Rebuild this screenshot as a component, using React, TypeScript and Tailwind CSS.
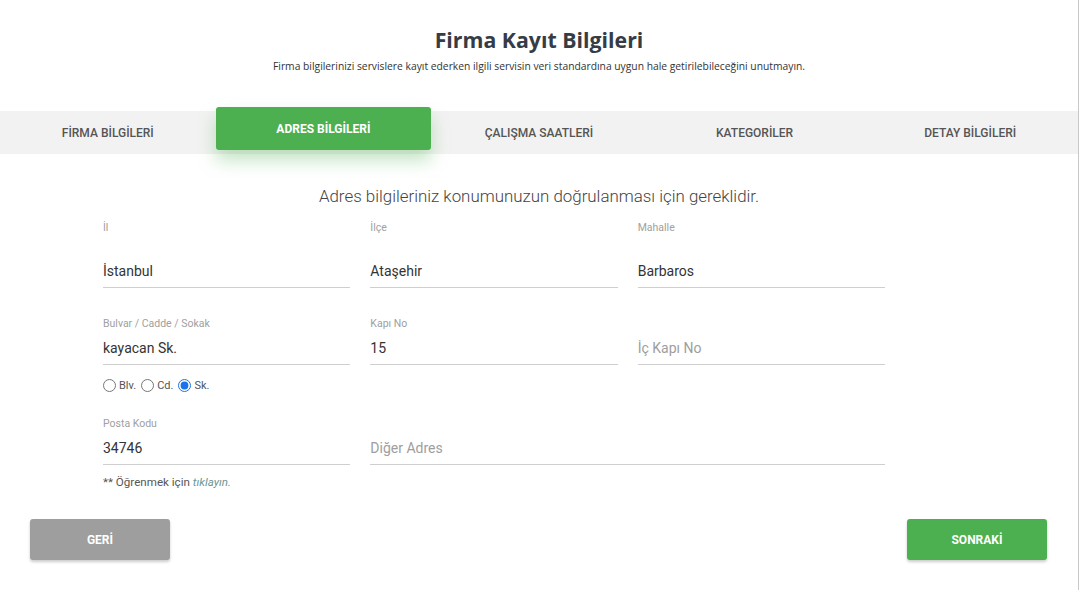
import React from "react";

const tabs = ["FİRMA BİLGİLERİ", "ADRES BİLGİLERİ", "ÇALIŞMA SAATLERİ", "KATEGORİLER", "DETAY BİLGİLERİ"];

function Field({ label, value, placeholder, top }: { label?: string; value?: string; placeholder?: string; top: string }) {
  return (
    <div className="flex flex-col">
      <div className="h-[14px] text-[10.5px] leading-[14px] text-[#a0a0a0]">{label ?? ""}</div>
      <div className={`${top} h-[33px] border-b border-[#cfcfcf] flex items-center text-[14px]`}>
        {value ? <span className="text-[#333]">{value}</span> : <span className="text-[#9e9e9e]">{placeholder}</span>}
      </div>
    </div>
  );
}

function Radio({ label, checked }: { label: string; checked?: boolean }) {
  return (
    <label className="flex items-center text-[11px] text-[#555]">
      <input type="radio" name="tip" defaultChecked={checked} className="w-[13px] h-[13px] m-0 mr-[3px] accent-[#1a73e8]" />
      <span className="mr-[5px] mt-[2px]">{label}</span>
    </label>
  );
}

export default function App() {
  return (
    <div className="w-[1079px] h-[590px] bg-white border-r border-[#c8c8c8] overflow-hidden" style={{ fontFamily: "Roboto, 'Noto Sans', sans-serif" }}>
      <div className="pt-[25px] text-center">
        <h1 className="text-[21.3px] leading-[30px] font-bold text-[#363c46]" style={{ fontFamily: "'Open Sans', sans-serif" }}>Firma Kayıt Bilgileri</h1>
        <p className="mt-[4px] text-[10.3px] leading-[14px] text-[#333]" style={{ fontFamily: "'Open Sans', sans-serif" }}>
          Firma bilgilerinizi servislere kayıt ederken ilgili servisin veri standardına uygun hale getirilebileceğini unutmayın.
        </p>
      </div>

      <div className="mt-[38px] h-[43px] bg-[#f2f2f2] flex w-[1078px]">
        {tabs.map((t, i) =>
          i === 1 ? (
            <div key={t} className="flex-1">
              <div className="-mt-[4px] h-[43px] bg-[#4caf50] rounded-[3px] flex items-center justify-center text-white text-[12px] font-bold shadow-[0_10px_18px_rgba(76,175,80,0.35)]">
                {t}
              </div>
            </div>
          ) : (
            <div key={t} className="flex-1 flex items-center justify-center text-[12px] font-medium text-[#555]">
              {t}
            </div>
          )
        )}
      </div>

      <p className="mt-[32px] text-center text-[16.9px] leading-[20px] font-light text-[#444]">
        Adres bilgileriniz konumunuzun doğrulanması için gereklidir.
      </p>

      <div className="pl-[103px] mt-[15px] w-[885px] box-content">
        <div className="grid grid-cols-3 gap-x-[20px] w-[782px]">
          <Field label="İl" value="İstanbul" top="mt-[20px]" />
          <Field label="İlçe" value="Ataşehir" top="mt-[20px]" />
          <Field label="Mahalle" value="Barbaros" top="mt-[20px]" />
        </div>
        <div className="grid grid-cols-3 gap-x-[20px] w-[782px] mt-[29px]">
          <div>
            <Field label="Bulvar / Cadde / Sokak" value="kayacan Sk." top="mt-[1px]" />
            <div className="mt-[12px] flex items-center h-[16px]">
              <Radio label="Blv." />
              <Radio label="Cd." />
              <Radio label="Sk." checked />
            </div>
          </div>
          <Field label="Kapı No" value="15" top="mt-[1px]" />
          <Field placeholder="İç Kapı No" top="mt-[1px]" />
        </div>
        <div className="grid grid-cols-3 gap-x-[20px] w-[782px] mt-[24px]">
          <div>
            <Field label="Posta Kodu" value="34746" top="mt-[1px]" />
            <div className="mt-[10px] text-[11.6px] leading-[14px] text-[#555]">
              ** Öğrenmek için <i className="text-[#6b9696]">tıklayın.</i>
            </div>
          </div>
          <div className="col-span-2">
            <Field placeholder="Diğer Adres" top="mt-[1px]" />
          </div>
        </div>
      </div>

      <div className="mt-[30px] px-[30px] flex justify-between w-[1077px]">
        <button className="w-[140px] h-[41px] rounded-[3px] bg-[#9e9e9e] text-white text-[12px] font-bold shadow-[0_2px_3px_rgba(0,0,0,0.2)]">GERİ</button>
        <button className="w-[140px] h-[41px] rounded-[3px] bg-[#4caf50] text-white text-[12px] font-bold shadow-[0_2px_3px_rgba(0,0,0,0.2)]">SONRAKİ</button>
      </div>
    </div>
  );
}
